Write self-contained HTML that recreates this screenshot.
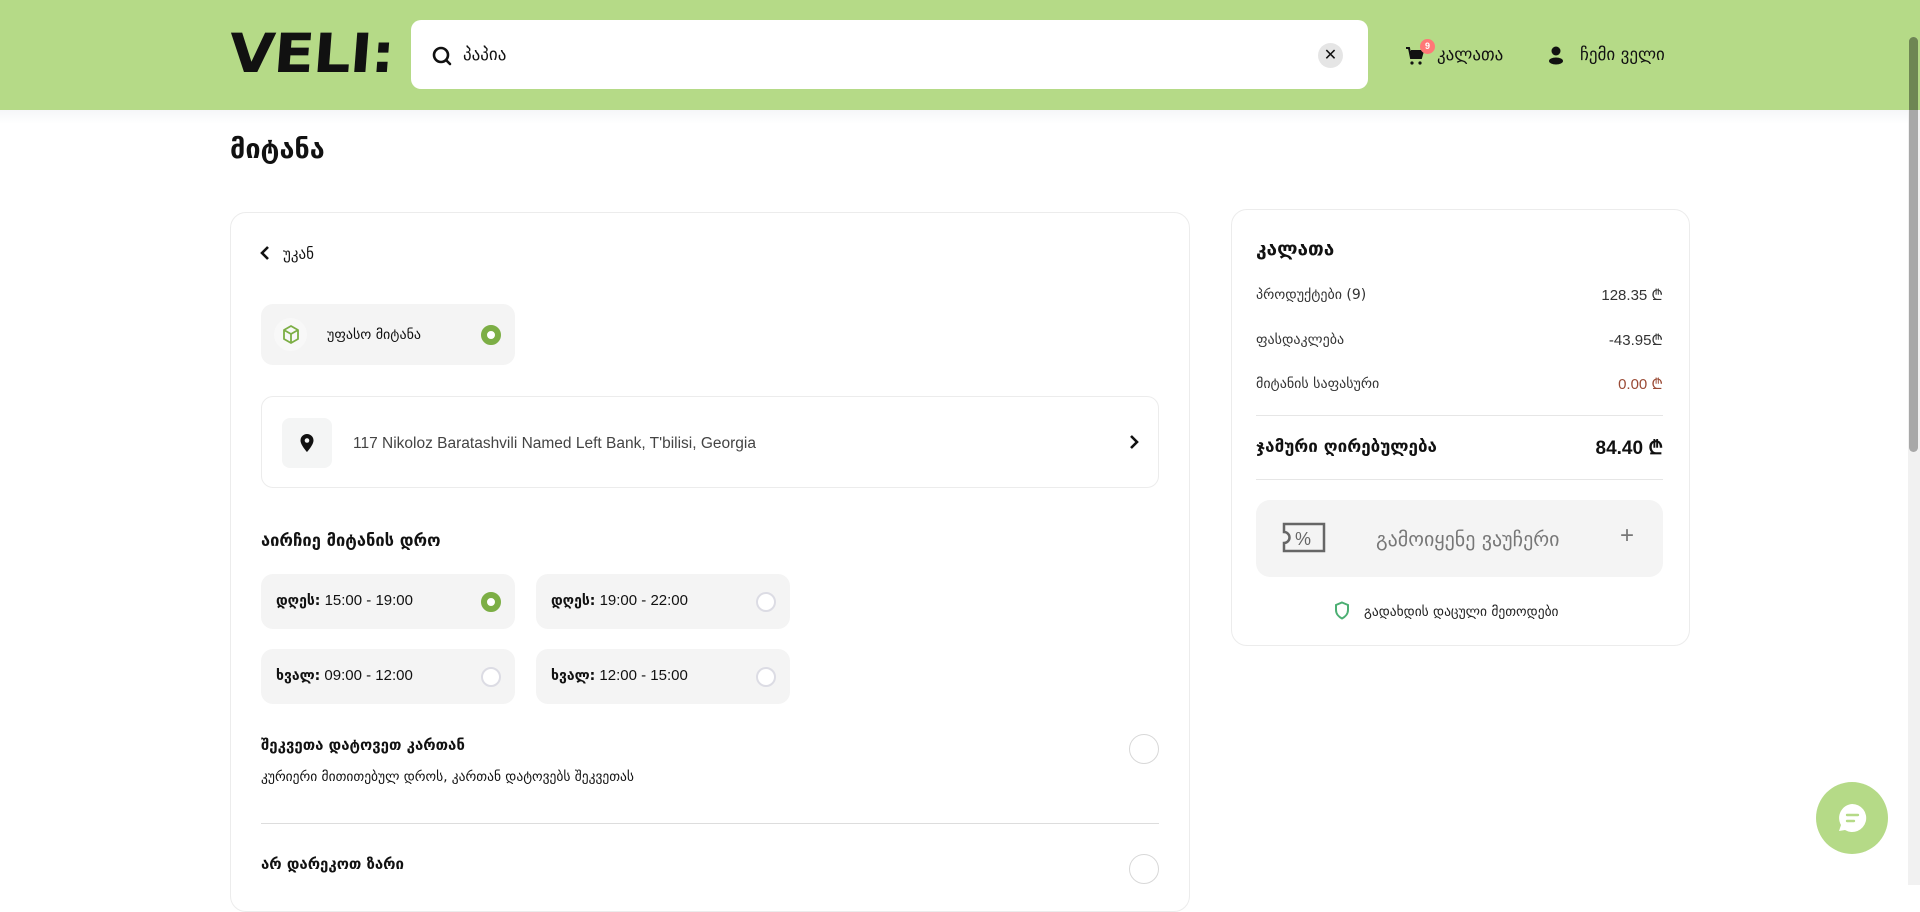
<!DOCTYPE html>
<html><head><meta charset="utf-8"><style>
*{box-sizing:border-box;margin:0;padding:0}
body{width:1920px;height:885px;overflow:hidden;background:#fff;font-family:"Liberation Sans","DejaVu Sans",sans-serif;color:#111;position:relative}
.a{position:absolute}
.hdr{left:0;top:0;width:1920px;height:110px;background:#b5da87}
.search{left:411px;top:20px;width:957px;height:69px;background:#fff;border-radius:10px}
.card{border:1px solid #ececec;border-radius:16px;background:#fff}
.pill{background:#f4f4f4;border-radius:12px}
.radio{width:20px;height:20px;border-radius:50%;border:2px solid #dcdce4;background:#fff}
.radio.on{border:6px solid #7cae45}
.b{font-weight:bold}
.t15{font-size:15px}
</style></head><body>
<div class="a hdr"></div>
<div class="a" style="left:229px;top:28px;font-size:54px;font-weight:900;letter-spacing:-1px;font-family:'DejaVu Sans',sans-serif;line-height:52px;transform:scaleX(1.1) skewX(-4deg);transform-origin:left">VELI:</div>
<div class="a search"></div>
<svg class="a" style="left:431px;top:45px" width="22" height="22" viewBox="0 0 22 22"><circle cx="10" cy="10" r="7" fill="none" stroke="#111" stroke-width="2.6"/><path d="M15 15l4 4" stroke="#111" stroke-width="2.6" stroke-linecap="round"/></svg>
<div class="a" style="left:463px;top:45px;font-size:17px;font-family:'DejaVu Sans',sans-serif">პაპია</div>
<div class="a" style="left:1318px;top:43px;width:25px;height:25px;border-radius:50%;background:#e5e5e5;text-align:center;line-height:25px;font-size:16px">✕</div>
<svg class="a" style="left:1405px;top:46px" width="20" height="20" viewBox="0 0 20 20"><path d="M1 2h3l2 10h10l2-7H6" fill="#111" stroke="#111" stroke-width="2"/><circle cx="7" cy="17" r="1.6" fill="#111"/><circle cx="15" cy="17" r="1.6" fill="#111"/></svg>
<div class="a" style="left:1420px;top:39px;width:15px;height:15px;border-radius:50%;background:#f77;color:#fff;font-size:9px;font-weight:bold;text-align:center;line-height:15px">9</div>
<div class="a" style="left:1437px;top:45px;font-size:17px;font-family:'DejaVu Sans',sans-serif">კალათა</div>
<svg class="a" style="left:1546px;top:45px" width="20" height="20" viewBox="0 0 20 20"><circle cx="10" cy="6" r="4.5" fill="#111"/><ellipse cx="10" cy="16" rx="7" ry="3.5" fill="#111"/></svg>
<div class="a" style="left:1580px;top:45px;font-size:17px;font-family:'DejaVu Sans',sans-serif">ჩემი ველი</div>
<div class="a" style="left:1908px;top:110px;width:12px;height:775px;background:#f1f1f1"></div>
<div class="a" style="left:1909px;top:37px;width:9px;height:415px;border-radius:5px;background:#a8a8a8"></div>
<div class="a" style="left:1909px;top:37px;width:9px;height:73px;border-radius:5px 5px 0 0;background:#6e8653"></div>
<div class="a" style="left:0;top:110px;width:1908px;height:14px;background:linear-gradient(#f5f6f8,#fff)"></div>

<div class="a b" style="left:230px;top:134px;font-size:27px;font-family:'DejaVu Sans',sans-serif">მიტანა</div>

<div class="a card" style="left:230px;top:212px;width:960px;height:700px"></div>
<svg class="a" style="left:258px;top:245px" width="14" height="16" viewBox="0 0 14 16"><path d="M10 2L4 8l6 6" fill="none" stroke="#111" stroke-width="2.6"/></svg>
<div class="a t15" style="left:283px;top:245px;font-family:'DejaVu Sans',sans-serif">უკან</div>

<div class="a pill" style="left:261px;top:304px;width:254px;height:61px"></div>
<div class="a" style="left:274px;top:318px;width:33px;height:33px;border-radius:50%;background:#f8f8f8"></div>
<svg class="a" style="left:281px;top:324px" width="20" height="22" viewBox="0 0 20 22"><path d="M10 2l7 4v9l-7 4-7-4V6zM3 6l7 4 7-4M10 10v9" fill="none" stroke="#7cae45" stroke-width="1.8" stroke-linejoin="round"/></svg>
<div class="a" style="left:327px;top:327px;font-size:14px;font-family:'DejaVu Sans',sans-serif">უფასო მიტანა</div>
<div class="a radio on" style="left:481px;top:325px"></div>

<div class="a card" style="left:261px;top:396px;width:898px;height:92px;border-radius:12px"></div>
<div class="a" style="left:282px;top:418px;width:50px;height:50px;border-radius:8px;background:#f4f5f5"></div>
<svg class="a" style="left:299px;top:433px" width="16" height="20" viewBox="0 0 16 20"><path d="M8 1a6.5 6.5 0 0 0-6.5 6.5C1.5 12 8 19 8 19s6.5-7 6.5-11.5A6.5 6.5 0 0 0 8 1z" fill="#111"/><circle cx="8" cy="7.5" r="2.3" fill="#f4f5f5"/></svg>
<div class="a t15" style="left:353px;top:435px;color:#444;font-size:15.5px">117 Nikoloz Baratashvili Named Left Bank, T'bilisi, Georgia</div>
<svg class="a" style="left:1128px;top:434px" width="12" height="16" viewBox="0 0 12 16"><path d="M3 2l6 6-6 6" fill="none" stroke="#111" stroke-width="2.6"/></svg>

<div class="a b" style="left:261px;top:531px;font-size:16.5px;font-family:'DejaVu Sans',sans-serif">აირჩიე მიტანის დრო</div>

<div class="a pill" style="left:261px;top:574px;width:254px;height:55px"></div>
<div class="a t15" style="left:276px;top:592px"><b style="font-family:'DejaVu Sans',sans-serif;font-size:14px">დღეს:</b> 15:00 - 19:00</div>
<div class="a radio on" style="left:481px;top:592px"></div>
<div class="a pill" style="left:536px;top:574px;width:254px;height:55px"></div>
<div class="a t15" style="left:551px;top:592px"><b style="font-family:'DejaVu Sans',sans-serif;font-size:14px">დღეს:</b> 19:00 - 22:00</div>
<div class="a radio" style="left:756px;top:592px"></div>
<div class="a pill" style="left:261px;top:649px;width:254px;height:55px"></div>
<div class="a t15" style="left:276px;top:667px"><b style="font-family:'DejaVu Sans',sans-serif;font-size:14px">ხვალ:</b> 09:00 - 12:00</div>
<div class="a radio" style="left:481px;top:667px"></div>
<div class="a pill" style="left:536px;top:649px;width:254px;height:55px"></div>
<div class="a t15" style="left:551px;top:667px"><b style="font-family:'DejaVu Sans',sans-serif;font-size:14px">ხვალ:</b> 12:00 - 15:00</div>
<div class="a radio" style="left:756px;top:667px"></div>

<div class="a b" style="left:261px;top:736px;font-size:15px;font-family:'DejaVu Sans',sans-serif">შეკვეთა დატოვეთ კართან</div>
<div class="a" style="left:261px;top:769px;font-size:13.5px;font-family:'DejaVu Sans',sans-serif">კურიერი მითითებულ დროს, კართან დატოვებს შეკვეთას</div>
<div class="a" style="left:1129px;top:734px;width:30px;height:30px;border-radius:50%;border:1.5px solid #d8d8d8"></div>
<div class="a" style="left:261px;top:823px;width:898px;height:1px;background:#ddd"></div>
<div class="a b" style="left:261px;top:855px;font-size:15px;font-family:'DejaVu Sans',sans-serif">არ დარეკოთ ზარი</div>
<div class="a" style="left:1129px;top:854px;width:30px;height:30px;border-radius:50%;border:1.5px solid #d8d8d8"></div>

<div class="a card" style="left:1231px;top:209px;width:459px;height:437px"></div>
<div class="a b" style="left:1256px;top:238px;font-size:19px;font-family:'DejaVu Sans',sans-serif">კალათა</div>
<div class="a" style="left:1256px;top:287px;font-size:14px;color:#333;font-family:'DejaVu Sans',sans-serif">პროდუქტები (9)</div>
<div class="a" style="left:1500px;width:163px;top:285px;font-size:15px;color:#333;text-align:right">128.35 ₾</div>
<div class="a" style="left:1256px;top:332px;font-size:14px;color:#333;font-family:'DejaVu Sans',sans-serif">ფასდაკლება</div>
<div class="a" style="left:1500px;width:163px;top:330px;font-size:15px;color:#333;text-align:right">-43.95₾</div>
<div class="a" style="left:1256px;top:376px;font-size:14px;color:#333;font-family:'DejaVu Sans',sans-serif">მიტანის საფასური</div>
<div class="a" style="left:1500px;width:163px;top:374px;font-size:15px;color:#9a4a35;text-align:right">0.00 ₾</div>
<div class="a" style="left:1256px;top:415px;width:407px;height:1px;background:#e6e6e6"></div>
<div class="a b" style="left:1256px;top:437px;font-size:17px;font-family:'DejaVu Sans',sans-serif">ჯამური ღირებულება</div>
<div class="a b" style="left:1500px;width:163px;top:434px;font-size:19px;text-align:right">84.40 ₾</div>
<div class="a" style="left:1256px;top:479px;width:407px;height:1px;background:#e6e6e6"></div>
<div class="a pill" style="left:1256px;top:500px;width:407px;height:77px;border-radius:14px"></div>
<svg class="a" style="left:1282px;top:522px" width="44" height="32" viewBox="0 0 44 32"><path d="M2 2h40v27H2v-8a5 5 0 0 0 0-11z" fill="none" stroke="#666" stroke-width="2.5"/><text x="13" y="23" font-size="18" fill="#666" font-family="Liberation Sans">%</text></svg>
<div class="a" style="left:1376px;top:527px;font-size:20px;color:#777;font-family:'DejaVu Sans',sans-serif">გამოიყენე ვაუჩერი</div>
<div class="a" style="left:1620px;top:522px;font-size:24px;color:#777">+</div>
<svg class="a" style="left:1334px;top:601px" width="16" height="19" viewBox="0 0 16 19"><path d="M8 1.5l6 2.5v5c0 4-3 7-6 8.5C5 16 2 13 2 9V4z" fill="none" stroke="#4caf73" stroke-width="2"/></svg>
<div class="a" style="left:1364px;top:604px;font-size:13.5px;font-family:'DejaVu Sans',sans-serif;color:#222">გადახდის დაცული მეთოდები</div>

<div class="a" style="left:1816px;top:782px;width:72px;height:72px;border-radius:50%;background:#b5da87"></div>
<svg class="a" style="left:1832px;top:798px" width="40" height="40" viewBox="0 0 40 40"><path d="M20 6a14 14 0 1 1-7 26l-6 1 2-6A14 14 0 0 1 20 6z" fill="#fff"/><path d="M15 17h11M15 23h7" stroke="#b5da87" stroke-width="2.4" stroke-linecap="round"/></svg>
</body></html>
